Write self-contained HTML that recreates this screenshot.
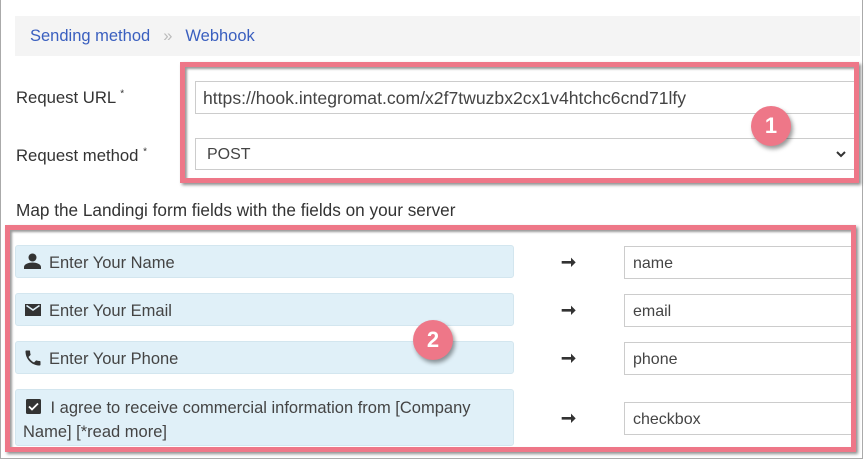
<!DOCTYPE html>
<html><head><style>
body{margin:0;width:867px;height:461px;background:#fff;font-family:"Liberation Sans",sans-serif;color:#333;position:relative;overflow:hidden}
.a{position:absolute}
.outer{left:0;top:0;width:863px;height:459px;border:1px solid #aaa;border-top:none;box-sizing:border-box}
.bc{left:15px;top:16px;width:845px;height:40px;background:#f4f4f4;font-size:16.5px;color:#3a5fbf;line-height:40px}
.lbl{font-size:16.7px;color:#333}
.inp{border:1px solid #ccc;box-sizing:border-box;background:#fff;font-size:16px;color:#444;padding-left:8px}
.red{border:5px solid #ee7788;box-sizing:border-box;box-shadow:2px 2px 3px rgba(0,0,0,.45), inset 2px 2px 2px rgba(0,0,0,.4)}
.fld{left:15px;width:499px;background:#e0f0f8;border:1px solid #d3e6ef;border-radius:3px;box-sizing:border-box;font-size:16.5px;color:#444}
.arr{left:561px;font-size:18px;color:#333;font-weight:bold}
.badge{width:40px;height:40px;border-radius:50%;background:#ee7788;color:#fff;font-weight:bold;font-size:22px;text-align:center;line-height:40px;box-shadow:2px 3px 4px rgba(0,0,0,.4)}
svg{position:absolute}
</style></head><body>
<div class="a outer"></div>
<div class="a bc"><span style="margin-left:15px">Sending method</span><span style="color:#bbb;margin:0 13px">»</span>Webhook</div>
<div class="a lbl" style="left:16px;top:88px">Request URL <sup style="font-size:10px">*</sup></div>
<div class="a lbl" style="left:16px;top:146px">Request method <sup style="font-size:10px">*</sup></div>
<div class="a inp" style="left:195px;top:81px;width:660px;height:33px;line-height:33px;font-size:17.6px;padding-left:7px">https://hook.integromat.com/x2f7twuzbx2cx1v4htchc6cnd71lfy</div>
<div class="a inp" style="left:195px;top:138px;width:660px;height:32px;line-height:32px;padding-left:11px">POST<svg style="right:8px;top:12px" width="10" height="7" viewBox="0 0 10 7"><path d="M1 1l4 4 4-4" stroke="#333" stroke-width="2" fill="none"/></svg></div>
<div class="a red" style="left:180px;top:62px;width:679px;height:121px"></div>
<div class="a badge" style="left:751px;top:106px">1</div>
<div class="a lbl" style="left:16px;top:200px;font-size:17.2px">Map the Landingi form fields with the fields on your server</div>

<div class="a fld" style="top:245px;height:33px;line-height:34px;padding-left:33px">Enter Your Name</div>
<svg style="left:24px;top:253px" width="17" height="16" viewBox="0 0 17 16"><circle cx="8.5" cy="4.5" r="4" fill="#333"/><path d="M0 16v-2c0-3 5-4.5 8.5-4.5S17 11 17 14v2z" fill="#333"/></svg>
<div class="a fld" style="top:293px;height:33px;line-height:34px;padding-left:33px">Enter Your Email</div>
<svg style="left:25px;top:304px" width="16" height="12" viewBox="0 0 16 12"><rect width="16" height="12" fill="#333"/><path d="M1.5 1.5L8 6l6.5-4.5" stroke="#e0f0f8" stroke-width="1.6" fill="none"/></svg>
<div class="a fld" style="top:341px;height:33px;line-height:34px;padding-left:33px">Enter Your Phone</div>
<svg style="left:23px;top:348px" width="20" height="20" viewBox="0 0 24 24"><path d="M6.6 10.8c1.4 2.8 3.8 5.1 6.6 6.6l2.2-2.2c.3-.3.7-.4 1-.2 1.1.4 2.3.6 3.6.6.6 0 1 .4 1 1V20c0 .6-.4 1-1 1C10.6 21 3 13.4 3 4c0-.6.4-1 1-1h3.5c.6 0 1 .4 1 1 0 1.3.2 2.5.6 3.6.1.3 0 .7-.2 1z" fill="#333"/></svg>
<div class="a fld" style="top:389px;height:57px;line-height:24px;padding:6px 20px 0 7px">&nbsp;&nbsp;&nbsp;&nbsp;&nbsp;&nbsp;I agree to receive commercial information from [Company Name] [*read more]</div>
<svg style="left:26px;top:399px" width="15" height="15" viewBox="0 0 15 15"><rect width="15" height="15" rx="1.5" fill="#333"/><path d="M3 7.5l3 3 6-6" stroke="#fff" stroke-width="1.8" fill="none"/></svg>

<div class="a arr" style="top:252px">&#10142;</div>
<div class="a arr" style="top:300px">&#10142;</div>
<div class="a arr" style="top:348px">&#10142;</div>
<div class="a arr" style="top:408px">&#10142;</div>
<div class="a inp" style="left:624px;top:246px;width:232px;height:33px;line-height:34px">name</div>
<div class="a inp" style="left:624px;top:294px;width:232px;height:33px;line-height:34px">email</div>
<div class="a inp" style="left:624px;top:342px;width:232px;height:33px;line-height:34px">phone</div>
<div class="a inp" style="left:624px;top:402px;width:232px;height:33px;line-height:34px">checkbox</div>
<div class="a red" style="left:5px;top:225px;width:851px;height:227px"></div>
<div class="a badge" style="left:413px;top:320px">2</div>
</body></html>
